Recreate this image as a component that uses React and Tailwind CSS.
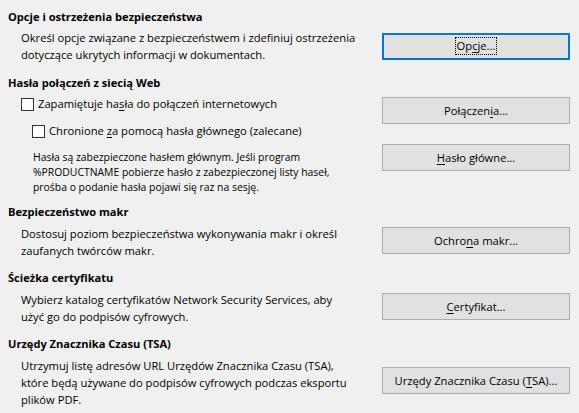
import React from "react";

const Mn = ({ children }) => (
  <span className="underline decoration-1 underline-offset-[2px]">{children}</span>
);

function Btn({ children, focus, className = "" }) {
  return (
    <div
      className={
        "w-[188px] h-[27px] shrink-0 flex items-center justify-center bg-[#e1e1e1] text-[11.2px] leading-[15px] " +
        (focus ? "border-2 border-[#0078d7] " : "border border-[#adadad] ") +
        className
      }
    >
      {focus ? (
        <span className="border border-dotted border-black px-[1px] leading-[16px]">{children}</span>
      ) : (
        <span>{children}</span>
      )}
    </div>
  );
}

function Box() {
  return <span className="w-[13px] h-[13px] shrink-0 border border-[#333333] bg-white" />;
}

const H = ({ children, className = "" }) => (
  <div className={"font-bold text-[11.1px] leading-[16px] " + className}>{children}</div>
);

export default function App() {
  return (
    <div className="w-[579px] h-[413px] overflow-hidden bg-[#f0f0f0] pl-2 pr-[9px] pt-[9px] text-black text-[11.2px] font-['Open_Sans',sans-serif]">
      <H>Opcje i ostrzeżenia bezpieczeństwa</H>
      <div className="flex items-center mt-[4px]">
        <p className="flex-1 pl-[13px] leading-[17px]">
          Określ opcje związane z bezpieczeństwem i zdefiniuj ostrzeżenia
          <br />
          dotyczące ukrytych informacji w dokumentach.
        </p>
        <Btn focus>
          Op<Mn>c</Mn>je...
        </Btn>
      </div>

      <H className="mt-[12px]">Hasła połączeń z siecią Web</H>
      <div className="flex items-start mt-[5px]">
        <div className="flex-1">
          <div className="h-[16px] flex items-center pl-[13px] gap-[4px]">
            <Box />
            <span className="leading-[16px]">
              Zapamiętuje ha<Mn>s</Mn>ła do połączeń internetowych
            </span>
          </div>
          <div className="h-[16px] flex items-center pl-[24px] gap-[4px] mt-[11px]">
            <Box />
            <span className="leading-[16px]">
              Chronione <Mn>z</Mn>a pomocą hasła głównego (zalecane)
            </span>
          </div>
        </div>
        <Btn className="mt-[1px]">
          Połączen<Mn>i</Mn>a...
        </Btn>
      </div>
      <div className="flex items-start mt-[5px]">
        <p className="flex-1 pl-[25px] pt-[6px] leading-[15px] text-[10.4px]">
          Hasła są zabezpieczone hasłem głównym. Jeśli program
          <br />
          %PRODUCTNAME pobierze hasło z zabezpieczonej listy haseł,
          <br />
          prośba o podanie hasła pojawi się raz na sesję.
        </p>
        <Btn>
          <Mn>H</Mn>asło główne...
        </Btn>
      </div>

      <H className="mt-[9px]">Bezpieczeństwo makr</H>
      <div className="flex items-start mt-[5px]">
        <p className="flex-1 pl-[13px] leading-[17px]">
          Dostosuj poziom bezpieczeństwa wykonywania makr i określ
          <br />
          zaufanych twórców makr.
        </p>
        <Btn className="mt-[2px]">
          Ochro<Mn>n</Mn>a makr...
        </Btn>
      </div>

      <H className="mt-[11px]">Ścieżka certyfikatu</H>
      <div className="flex items-start mt-[5px]">
        <p className="flex-1 pl-[13px] leading-[17px]">
          Wybierz katalog certyfikatów Network Security Services, aby
          <br />
          użyć go do podpisów cyfrowych.
        </p>
        <Btn className="mt-[2px]">
          <Mn>C</Mn>ertyfikat...
        </Btn>
      </div>

      <H className="mt-[11px]">Urzędy Znacznika Czasu (TSA)</H>
      <div className="flex items-start mt-[5px]">
        <p className="flex-1 pl-[13px] leading-[17px]">
          Utrzymuj listę adresów URL Urzędów Znacznika Czasu (TSA),
          <br />
          które będą używane do podpisów cyfrowych podczas eksportu
          <br />
          plików PDF.
        </p>
        <Btn className="mt-[10px]">
          Urzędy Znacznika Czasu (<Mn>T</Mn>SA)...
        </Btn>
      </div>
    </div>
  );
}
